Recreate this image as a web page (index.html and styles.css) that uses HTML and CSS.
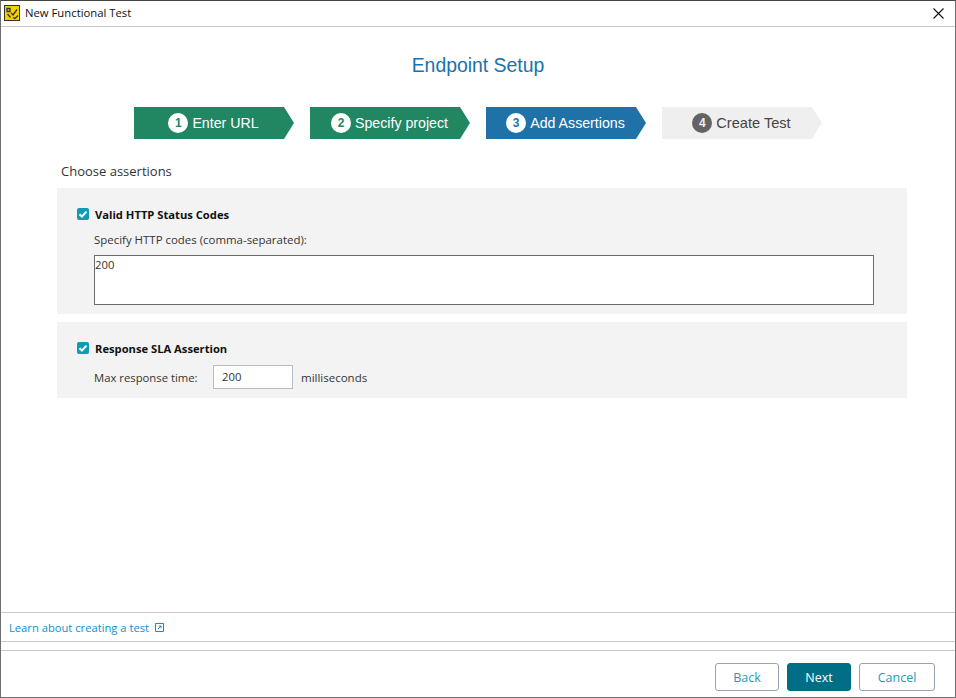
FILE: index.html
```html
<!DOCTYPE html>
<html lang="en">
<head>
<meta charset="utf-8">
<title>New Functional Test</title>
<link rel="stylesheet" href="styles.css">
</head>
<body>
<div class="window">
  <header class="titlebar">
    <svg class="app-icon" width="16" height="16" viewBox="0 0 16 16"><rect x="0.5" y="0.5" width="15" height="15" fill="#f5d000" stroke="#333"/><path d="M3 3.5h3v3H3zM3.5 9l3 3.5M7 8l2 2 4-5.5M9 12.5l2 1 3-3" fill="none" stroke="#333" stroke-width="1.3"/></svg>
    <span class="title-text">New Functional Test</span>
    <svg class="close-icon" width="11" height="11" viewBox="0 0 11 11"><path d="M0.5 0.5l10 10M10.5 0.5l-10 10" stroke="#111" stroke-width="1.1" fill="none"/></svg>
  </header>
  <main class="content">
    <h1 class="heading">Endpoint Setup</h1>
    <ol class="steps">
      <li class="step done"><span class="num">1</span>Enter URL</li>
      <li class="step done"><span class="num">2</span>Specify project</li>
      <li class="step active"><span class="num">3</span>Add Assertions</li>
      <li class="step todo"><span class="num">4</span>Create Test</li>
    </ol>
    <p class="choose">Choose assertions</p>
    <section class="panel panel-status">
      <label class="check-row"><span class="check"><svg width="12" height="12" viewBox="0 0 12 12"><path d="M2.5 6.2l2.4 2.4 4.6-5" fill="none" stroke="#fff" stroke-width="2"/></svg></span>Valid HTTP Status Codes</label>
      <div class="field-label">Specify HTTP codes (comma-separated):</div>
      <div class="textarea">200</div>
    </section>
    <section class="panel panel-sla">
      <label class="check-row"><span class="check"><svg width="12" height="12" viewBox="0 0 12 12"><path d="M2.5 6.2l2.4 2.4 4.6-5" fill="none" stroke="#fff" stroke-width="2"/></svg></span>Response SLA Assertion</label>
      <div class="sla-row"><span class="sla-label">Max response time:</span><span class="input">200</span><span class="sla-unit">milliseconds</span></div>
    </section>
  </main>
  <div class="learn">
    <a class="learn-link" href="#">Learn about creating a test</a>
    <svg width="9" height="9" viewBox="0 0 9 9"><path d="M0.5 0.5h8v8h-8z M3 6l3-3M3.8 3h2.2v2.2" fill="none" stroke="#0f8fcf" stroke-width="1"/></svg>
  </div>
  <div class="spacer"></div>
  <footer class="actions">
    <button class="btn">Back</button>
    <button class="btn primary">Next</button>
    <button class="btn">Cancel</button>
  </footer>
</div>
</body>
</html>
```
FILE: styles.css
```css
* { box-sizing: border-box; }
html, body { margin: 0; padding: 0; height: 100%; background: #fff; }
body { font-family: "Open Sans", "Noto Sans", sans-serif; font-size: 11.3px; color: #333; }
.window { width: 956px; height: 698px; border: 1px solid #6e6e6e; border-top-color: #444; display: flex; flex-direction: column; overflow: hidden; }
.titlebar { height: 26px; flex: none; display: flex; align-items: center; padding: 0 11px 0 3px; border-bottom: 1px solid #c8c8c8; }
.app-icon { flex: none; margin: 0 5px 1px 0; }
.title-text { font-size: 11.3px; color: #111; flex: 1; padding-bottom: 2px; }
.content { flex: 1; padding: 0 48px 0 56px; display: flex; flex-direction: column; }
.heading { margin: 25px 0 0; height: 27px; font: 400 19.4px/27px "Liberation Sans", Arial, sans-serif; color: #1a72ac; text-align: center; padding-right: 8px; }
.steps { list-style: none; margin: 28px 0 0; padding: 0 0 0 77px; display: flex; gap: 16px; height: 32px; }
.step { width: 160px; height: 32px; display: flex; align-items: center; justify-content: center; padding: 0 10px 0 9px; font: 14.2px "Liberation Sans", Arial, sans-serif; color: #fff; clip-path: polygon(0 0, 150px 0, 160px 50%, 150px 100%, 0 100%); }
.done { background: #218763; }
.active { background: #1f72a8; }
.todo { background: #efefef; color: #444; font-size: 14.6px; }
.num { width: 20px; height: 20px; border-radius: 50%; background: #fff; color: #218763; font-weight: 700; font-size: 12px; display: flex; align-items: center; justify-content: center; margin-right: 4px; flex: none; }
.active .num { color: #1f72a8; }
.todo .num { background: #636363; color: #eee; }
.choose { margin: 23px 0 0 4px; height: 18px; font-size: 13px; line-height: 18px; color: #333; }
.panel { background: #f3f3f3; width: 850px; }
.panel-status { margin-top: 8px; height: 126px; padding: 17px 33px 0 20px; }
.panel-sla { margin-top: 8px; height: 76px; padding: 17px 33px 0 20px; }
.check-row { display: flex; align-items: center; height: 18px; font-size: 11.2px; font-weight: 700; color: #111; }
.check { width: 12px; height: 12px; border-radius: 2px; background: #0e9bb4; margin-right: 6px; flex: none; display: flex; }
.field-label { margin: 9px 0 0 17px; height: 16px; line-height: 16px; font-size: 11.45px; }
.textarea { margin: 7px 0 0 17px; width: 780px; height: 50px; border: 1px solid #6b6b6b; background: #fff; line-height: 18px; }
.sla-row { display: flex; align-items: center; margin: 8px 0 0 17px; height: 24px; }
.sla-label { width: 119px; }
.input { width: 80px; height: 24px; border: 1px solid #b4bccb; background: #fff; padding-left: 8px; line-height: 22px; margin-right: 8px; color: #333; }
.sla-unit { font-size: 11.5px; }
.learn { flex: none; height: 30px; border-top: 1px solid #c8c8c8; border-bottom: 1px solid #c8c8c8; display: flex; align-items: center; padding-left: 8px; gap: 6px; }
.learn-link { color: #0f8fcf; text-decoration: none; font-size: 11.2px; }
.spacer { flex: none; height: 9px; border-bottom: 1px solid #c8c8c8; }
.actions { flex: none; height: 46px; display: flex; justify-content: flex-end; align-items: flex-start; gap: 8px; padding: 12px 20px 0 0; }
.btn { height: 28px; width: 64px; border: 1px solid #98a2b3; border-radius: 3px; background: #fff; color: #1a9db5; font: 12.5px "Open Sans", sans-serif; padding: 1px 0 0; }
.btn:last-child { width: 76px; }
.primary { background: #006e85; border-color: #006e85; color: #fff; }
```
